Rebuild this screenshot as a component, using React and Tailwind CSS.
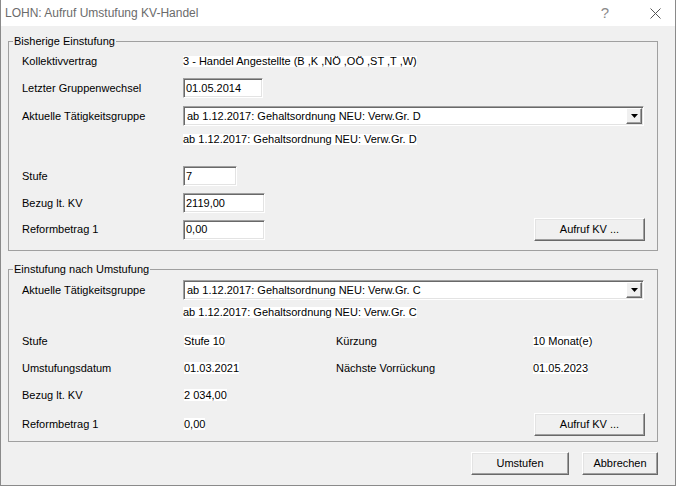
import React from "react";

const font = { fontFamily: '"Liberation Sans", Arial, sans-serif' };

const Field = ({ value, width }) => (
  <div
    className={`${width} h-[20px] bg-white border border-t-[#a0a0a0] border-l-[#a0a0a0] border-r-white border-b-white shadow-[inset_1px_1px_0_#696969,inset_-1px_-1px_0_#e3e3e3] flex items-center pl-[2px] text-[11px] leading-none`}
  >
    {value}
  </div>
);

const Combo = ({ value }) => (
  <div className="w-[461px] h-[20px] bg-white border border-t-[#a0a0a0] border-l-[#a0a0a0] border-r-white border-b-white shadow-[inset_1px_1px_0_#696969,inset_-1px_-1px_0_#e3e3e3] flex items-center text-[11px] leading-none">
    <span className="flex-1 pl-[3px]">{value}</span>
    <div className="w-[16px] h-[16px] mr-[1px] bg-[#f0f0f0] border border-t-white border-l-white border-r-[#696969] border-b-[#696969] shadow-[inset_-1px_-1px_0_#a0a0a0] flex items-center justify-center">
      <svg width="7" height="4" viewBox="0 0 7 4">
        <path d="M0 0h7L3.5 4z" fill="#000" />
      </svg>
    </div>
  </div>
);

const Button = ({ children, width }) => (
  <button
    className={`${width} h-[23px] bg-[#f0f0f0] border border-t-white border-l-white border-r-[#696969] border-b-[#696969] shadow-[inset_-1px_-1px_0_#a0a0a0,inset_1px_1px_0_#e3e3e3] text-[11px] leading-none text-black`}
  >
    {children}
  </button>
);

const Label = ({ children }) => <div className="w-[161px] shrink-0">{children}</div>;

const Static = ({ children }) => <span className="bg-white px-0">{children}</span>;

const GroupBox = ({ title, children }) => (
  <fieldset className="w-[650px] border border-[#a0a0a0]">
    <legend className="ml-[4px] px-[1px] text-[11px] leading-[14px]">{title}</legend>
    <div className="pl-[13px] flex flex-col text-[11px] leading-none">{children}</div>
  </fieldset>
);

export default function App() {
  return (
    <div style={font} className="w-[676px] h-[486px] flex flex-col border-x border-b border-[#8a8a8a] text-black">
      {/* title bar */}
      <div className="h-[26px] bg-white flex items-center pl-[4px] pr-[14px] text-[12px] text-[#6b6b6b]">
        <span className="flex-1">LOHN: Aufruf Umstufung KV-Handel</span>
        <span className="text-[15px] text-[#8a8a8a] mr-[41px]">?</span>
        <svg width="11" height="11" viewBox="0 0 11 11">
          <path d="M0.5 0.5l10 10M10.5 0.5l-10 10" stroke="#555" strokeWidth="1" />
        </svg>
      </div>

      <div className="flex-1 bg-[#f0f0f0] pl-[7px] pt-[8px]">
        <GroupBox title="Bisherige Einstufung">
          <div className="h-[20px] mt-[3px] flex items-center">
            <Label>Kollektivvertrag</Label>
            <Static>3 - Handel Angestellte (B ,K ,NÖ ,OÖ ,ST ,T ,W)</Static>
          </div>
          <div className="h-[20px] mt-[7px] flex items-center">
            <Label>Letzter Gruppenwechsel</Label>
            <Field value="01.05.2014" width="w-[80px]" />
          </div>
          <div className="h-[20px] mt-[8px] flex items-center">
            <Label>Aktuelle Tätigkeitsgruppe</Label>
            <Combo value="ab 1.12.2017: Gehaltsordnung NEU: Verw.Gr. D" />
          </div>
          <div className="h-[16px] mt-[5px] flex items-center">
            <Label />
            <Static>ab 1.12.2017: Gehaltsordnung NEU: Verw.Gr. D</Static>
          </div>
          <div className="h-[20px] mt-[19px] flex items-center">
            <Label>Stufe</Label>
            <Field value="7" width="w-[54px]" />
          </div>
          <div className="h-[20px] mt-[7px] flex items-center">
            <Label>Bezug lt. KV</Label>
            <Field value="2119,00" width="w-[82px]" />
          </div>
          <div className="h-[23px] mt-[5px] mb-[9px] flex items-center">
            <Label>Reformbetrag 1</Label>
            <Field value="0,00" width="w-[82px]" />
            <div className="w-[269px]" />
            <Button width="w-[111px]">Aufruf KV ...</Button>
          </div>
        </GroupBox>

        <div className="h-[11px]" />

        <GroupBox title="Einstufung nach Umstufung">
          <div className="h-[20px] mt-[4px] flex items-center">
            <Label>Aktuelle Tätigkeitsgruppe</Label>
            <Combo value="ab 1.12.2017: Gehaltsordnung NEU: Verw.Gr. C" />
          </div>
          <div className="h-[16px] mt-[4px] flex items-center">
            <Label />
            <Static>ab 1.12.2017: Gehaltsordnung NEU: Verw.Gr. C</Static>
          </div>
          <div className="h-[20px] mt-[11px] flex items-center">
            <Label>Stufe</Label>
            <div className="w-[153px] pl-[1px]"><Static>Stufe 10</Static></div>
            <div className="w-[197px]">Kürzung</div>
            <Static>10 Monat(e)</Static>
          </div>
          <div className="h-[20px] mt-[7px] flex items-center">
            <Label>Umstufungsdatum</Label>
            <div className="w-[153px] pl-[1px]"><Static>01.03.2021</Static></div>
            <div className="w-[197px]">Nächste Vorrückung</div>
            <Static>01.05.2023</Static>
          </div>
          <div className="h-[20px] mt-[7px] flex items-center">
            <Label>Bezug lt. KV</Label>
            <div className="pl-[1px]"><Static>2 034,00</Static></div>
          </div>
          <div className="h-[23px] mt-[8px] mb-[5px] flex items-center">
            <Label>Reformbetrag 1</Label>
            <div className="w-[351px] pl-[1px]"><Static>0,00</Static></div>
            <Button width="w-[111px]">Aufruf KV ...</Button>
          </div>
        </GroupBox>

        <div className="w-[650px] mt-[10px] flex justify-end gap-[13px]">
          <Button width="w-[98px]">Umstufen</Button>
          <Button width="w-[76px]">Abbrechen</Button>
        </div>
      </div>
    </div>
  );
}
